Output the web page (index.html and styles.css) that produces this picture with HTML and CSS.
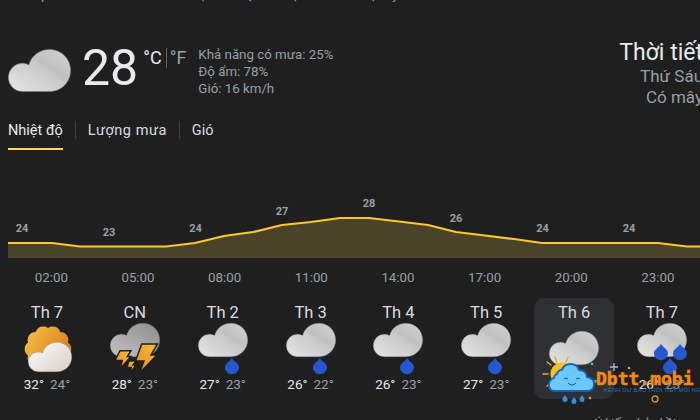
FILE: index.html
```html
<!DOCTYPE html>
<html lang="vi">
<head>
  <meta charset="UTF-8">
  <title>Thời tiết</title>
  <link rel="stylesheet" href="styles.css">
</head>
<body>

  <svg class="defs" width="0" height="0">
    <defs>
      <linearGradient id="greyCloud" x1="0" y1="1" x2="1" y2="0">
        <stop offset="0" stop-color="#e6e6e6"/>
        <stop offset="0.55" stop-color="#c9c9c9"/>
        <stop offset="0.62" stop-color="#c0c0c0"/>
        <stop offset="1" stop-color="#d4d4d4"/>
      </linearGradient>
      <linearGradient id="darkCloud" x1="0" y1="1" x2="1" y2="0">
        <stop offset="0" stop-color="#c4c4c4"/>
        <stop offset="1" stop-color="#8c8c8c"/>
      </linearGradient>
      <linearGradient id="whiteCloud" x1="0" y1="0" x2="1" y2="1">
        <stop offset="0" stop-color="#ffffff"/>
        <stop offset="1" stop-color="#d6cdc6"/>
      </linearGradient>
      <linearGradient id="sunFill" x1="0" y1="0" x2="1" y2="0.6">
        <stop offset="0" stop-color="#f7c547"/>
        <stop offset="1" stop-color="#d9781f"/>
      </linearGradient>
      <linearGradient id="boltFill" x1="1" y1="0" x2="0" y2="1">
        <stop offset="0" stop-color="#f8bd3a"/>
        <stop offset="1" stop-color="#e58a1e"/>
      </linearGradient>
      <symbol id="cloud" viewBox="0 0 50 34" overflow="visible">
        <path d="M11.5 33.7A11.2 11.2 0 0 1 11.5 11.3C13.4 11.3 15 11.7 16.6 12.6C18.6 5 25.2.3 33 .3C42.3.3 49.7 7.7 49.7 17C49.7 26.300 42.300 33.700 33 33.700Z" stroke="#7d7d7d" stroke-opacity=".55" stroke-width=".7"/>
      </symbol>
      <path id="drop" d="M7 0C8.500 3 14 5.500 14 9.200A7 7 0 0 1 0 9.200C0 5.500 5.500 3 7 0Z" fill="#2657cf"/>
    </defs>
  </svg>

  <div class="source"><div class="source-line">Trên quả bản tin mới nhất ở khu vực <a>Hà Nội cho bạn trên thiết bị</a> này</div></div>

  <div class="now">
    <div class="now-main">
      <svg class="now-icon" width="63" height="43"><use href="#cloud" width="63" height="43" fill="url(#greyCloud)"/></svg>
      <div class="now-temp">28</div>
      <div class="units"><span class="unit-on">°C</span><span class="unit-off">°F</span></div>
      <div class="now-info">
        <div>Khả năng có mưa: 25%</div>
        <div>Độ ẩm: 78%</div>
        <div>Gió: 16 km/h</div>
      </div>
    </div>
    <div class="now-place">
      <div class="place-title">Thời tiết</div>
      <div class="place-sub">Thứ Sáu</div>
      <div class="place-sub">Có mây</div>
    </div>
  </div>

  <div class="tabs">
    <div class="tab tab-active">Nhiệt độ</div>
    <div class="tab-sep"></div>
    <div class="tab tab-wide">Lượng mưa</div>
    <div class="tab-sep"></div>
    <div class="tab">Gió</div>
  </div>

  <svg class="chart" viewBox="0 190 700 76" width="700" height="76">
    <path class="chart-area" d="M8 243H52L80 246.500H166L195 243L224 236L253 232L282 225L311 222L340 218H369L399 221.500L428 225L456 232L485 235.500L514 239L542 243H658L687 246.500H700V258H8Z"/>
    <path class="chart-line" d="M8 243H52L80 246.500H166L195 243L224 236L253 232L282 225L311 222L340 218H369L399 221.500L428 225L456 232L485 235.500L514 239L542 243H658L687 246.500H700"/>
    <g class="chart-labels">
      <text x="22" y="232">24</text>
      <text x="109" y="236">23</text>
      <text x="195.500" y="232">24</text>
      <text x="282" y="215">27</text>
      <text x="369" y="207">28</text>
      <text x="456" y="222">26</text>
      <text x="542.500" y="232">24</text>
      <text x="629" y="232">24</text>
    </g>
  </svg>

  <div class="times">
    <div>02:00</div><div>05:00</div><div>08:00</div><div>11:00</div>
    <div>14:00</div><div>17:00</div><div>20:00</div><div>23:00</div>
  </div>

  <div class="days">
    <div class="day">
      <div class="day-name">Th 7</div>
      <svg class="day-icon" viewBox="0 0 50 50" width="50" height="50">
        <path fill="url(#sunFill)" d="M26 5A8 8 0 0 1 38.300 9A8 8 0 0 1 46 19.500A8 8 0 0 1 46 32.500A8 8 0 0 1 38.300 43A8 8 0 0 1 26 47A8 8 0 0 1 13.700 43A8 8 0 0 1 6 32.500A8 8 0 0 1 6 19.500A8 8 0 0 1 13.700 9A8 8 0 0 1 26 5Z"/>
        <use href="#cloud" x="5" y="19" width="46" height="30" fill="url(#whiteCloud)"/>
      </svg>
      <div class="day-temps"><span class="hi">32°</span><span class="lo">24°</span></div>
    </div>

    <div class="day">
      <div class="day-name">CN</div>
      <svg class="day-icon" viewBox="0 0 50 50" width="50" height="50">
        <use href="#cloud" width="50" height="34" fill="url(#darkCloud)"/>
        <g fill="url(#boltFill)" stroke="#1f1f1f" stroke-width="1.500">
          <path d="M31.700 21H47.500L41 32H47L29.500 50L34 38H25.500Z"/>
          <path d="M10 27.700H21L17.300 33.500H21L10 46L12.300 37.500H5Z"/>
          <path d="M19 38H26L23 42H26L20.500 50L21.300 44.500H16.800Z"/>
        </g>
      </svg>
      <div class="day-temps"><span class="hi">28°</span><span class="lo">23°</span></div>
    </div>

    <div class="day">
      <div class="day-name">Th 2</div>
      <svg class="day-icon" viewBox="0 0 50 50" width="50" height="50">
        <use href="#cloud" width="50" height="34" fill="url(#greyCloud)"/>
        <use href="#drop" x="27" y="35"/>
      </svg>
      <div class="day-temps"><span class="hi">27°</span><span class="lo">23°</span></div>
    </div>

    <div class="day">
      <div class="day-name">Th 3</div>
      <svg class="day-icon" viewBox="0 0 50 50" width="50" height="50">
        <use href="#cloud" width="50" height="34" fill="url(#greyCloud)"/>
        <use href="#drop" x="27" y="35"/>
      </svg>
      <div class="day-temps"><span class="hi">26°</span><span class="lo">22°</span></div>
    </div>

    <div class="day">
      <div class="day-name">Th 4</div>
      <svg class="day-icon" viewBox="0 0 50 50" width="50" height="50">
        <use href="#cloud" width="50" height="34" fill="url(#greyCloud)"/>
        <use href="#drop" x="27" y="35"/>
      </svg>
      <div class="day-temps"><span class="hi">26°</span><span class="lo">23°</span></div>
    </div>

    <div class="day">
      <div class="day-name">Th 5</div>
      <svg class="day-icon" viewBox="0 0 50 50" width="50" height="50">
        <use href="#cloud" width="50" height="34" fill="url(#greyCloud)"/>
        <use href="#drop" x="27" y="35"/>
      </svg>
      <div class="day-temps"><span class="hi">27°</span><span class="lo">23°</span></div>
    </div>

    <div class="day day-active">
      <div class="day-name">Th 6</div>
      <svg class="day-icon" viewBox="0 0 50 50" width="50" height="50">
        <use href="#cloud" y="8" width="50" height="34" fill="url(#greyCloud)"/>
      </svg>
      <div class="day-temps"><span class="hi">28°</span><span class="lo">24°</span></div>
    </div>

    <div class="day">
      <div class="day-name">Th 7</div>
      <svg class="day-icon" viewBox="0 0 50 50" width="50" height="50">
        <use href="#cloud" width="50" height="34" fill="url(#greyCloud)"/>
        <use href="#drop" x="17" y="21"/>
        <use href="#drop" x="36" y="21"/>
        <use href="#drop" x="26" y="35"/>
      </svg>
      <div class="day-temps"><span class="hi">26°</span><span class="lo">23°</span></div>
    </div>
  </div>

  <div class="feedback">Ý kiến phản hồi</div>

  <!-- logo dan de len goc duoi -->
  <div class="watermark">
    <svg class="wm-art" viewBox="0 0 100 60" width="100" height="60">
      <g stroke="#f2a71b" stroke-width="1.500" stroke-linecap="round">
        <path d="M3 19H8M7 7L11 10M15 2L17 7M28 2L26 7M7 31L11 28"/>
      </g>
      <circle cx="22" cy="19" r="11.500" fill="#f7c21e"/>
      <path d="M15 18Q17 15.500 19 18" fill="none" stroke="#b9780c" stroke-width="1"/>
      <path d="M15 36H47Q54 36 54 29Q54 23 47 22Q46 15 39 15Q37 9 30.500 9Q24 9 22 15Q19 14 17 19Q14 20 14 23Q9 25 9 30Q9 36 15 36Z" fill="#6cc8fa" stroke="#1662b8" stroke-width="1.800"/>
      <path d="M24 24Q26 22 28 24M36 24Q38 22 40 24" fill="none" stroke="#15508f" stroke-width="1"/>
      <path d="M28 28Q32 32 36 28" fill="none" stroke="#15508f" stroke-width="1"/>
      <g fill="#2f8fe0">
        <path d="M25 40Q27.500 43 27.500 44.500A2.500 2.500 0 0 1 22.500 44.500Q22.500 43 25 40Z"/>
        <path d="M34 42Q36.500 45 36.500 46.500A2.500 2.500 0 0 1 31.500 46.500Q31.500 45 34 42Z"/>
        <path d="M42 40Q44.500 43 44.500 44.500A2.500 2.500 0 0 1 39.500 44.500Q39.500 43 42 40Z"/>
      </g>
      <path d="M74 8V16M70 12H78" stroke="#c9a9f0" stroke-width="1.300"/>
      <circle cx="52" cy="9" r="1.300" fill="#4fc7c7"/>
      <circle cx="89" cy="13" r="1.300" fill="#ef9a1c"/>
      <circle cx="50" cy="43" r="1.300" fill="#ef9a1c"/>
      <circle cx="56" cy="26" r="1.200" fill="#8a8f98"/>
    </svg>
    <svg class="wm-ring" viewBox="0 0 8 8" width="8" height="8"><circle cx="4" cy="4" r="3" fill="none" stroke="#e99a1e" stroke-width="1.300"/></svg>
    <div class="wm-name">Dbtt.mobi</div>
    <div class="wm-tag">KÊNH DỰ BÁO THỜI TIẾT MỖI NGÀY!</div>
  </div>

</body>
</html>
```

FILE: styles.css
```css
html, body {
  margin: 0;
  height: 420px;
  overflow: hidden;
}

body {
  position: relative;
  background: #1f1f1f;
  color: #e8eaed;
  font-family: Roboto, "Liberation Sans", "Noto Sans", sans-serif;
}

.defs {
  position: absolute;
}

.source {
  height: 4px;
  overflow: hidden;
  padding-left: 8px;
}

.source-line {
  margin-top: -13px;
  font-size: 13px;
  line-height: 16px;
  color: #9aa0a6;
  white-space: nowrap;
}

.source-line a {
  color: #8ab4f8;
}

.now {
  display: flex;
  justify-content: space-between;
  align-items: flex-start;
  padding: 36px 0 0 8px;
}

.now-main {
  display: flex;
  align-items: flex-start;
  padding-top: 4px;
}

.now-icon {
  display: block;
  margin-top: 5px;
  overflow: visible;
}

.now-temp {
  margin-left: 11px;
  font-size: 50px;
  line-height: 48px;
}

.units {
  display: flex;
  margin-top: 4px;
  margin-left: 5px;
  font-size: 18px;
  line-height: 20px;
}

.unit-on {
  padding-right: 4px;
}

.unit-off {
  padding-left: 3px;
  border-left: 1px solid #5f6368;
  color: #9aa0a6;
}

.now-info {
  margin-top: 2px;
  margin-left: 12px;
  font-size: 13.3px;
  line-height: 17px;
  color: #9aa0a6;
}

.now-place {
  margin-right: -3px;
  text-align: right;
  white-space: nowrap;
}

.place-title {
  font-size: 23px;
  line-height: 26px;
  color: #e8eaed;
}

.place-sub {
  font-size: 17px;
  line-height: 21px;
  color: #9aa0a6;
}

.tabs {
  display: flex;
  align-items: flex-start;
  margin-top: 11px;
  padding-left: 8px;
  height: 31px;
}

.tab {
  font-size: 14.5px;
  line-height: 23px;
  color: #dadce0;
}

.tab-wide {
  letter-spacing: 0.55px;
}

.tab-active {
  height: 29px;
  border-bottom: 2px solid #fdd663;
  color: #e8eaed;
}

.tab-sep {
  width: 1px;
  height: 18px;
  margin: 2px 12px 0;
  background: #3c4043;
}

.chart {
  display: block;
  margin-top: 40px;
}

.chart-area {
  fill: #4b422a;
}

.chart-line {
  fill: none;
  stroke: #fbc92e;
  stroke-width: 2.2;
}

.chart-labels text {
  font-size: 11px;
  font-weight: 700;
  fill: #9aa0a6;
  text-anchor: middle;
}

.times {
  display: grid;
  grid-template-columns: repeat(8, 86.67px);
  padding-left: 8px;
  font-size: 13.3px;
  line-height: 24px;
  text-align: center;
  color: #9aa0a6;
}

.days {
  display: grid;
  grid-template-columns: repeat(8, 80px);
  column-gap: 7.85px;
  margin-top: 8px;
  padding-left: 7px;
}

.day {
  display: flex;
  flex-direction: column;
  align-items: center;
  box-sizing: border-box;
  height: 101px;
  padding-top: 4px;
  border-radius: 10px;
}

.day-active {
  background: #2f3033;
}

.day-name {
  font-size: 16.5px;
  line-height: 21px;
  color: #dadce0;
}

.day-icon {
  display: block;
  overflow: visible;
}

.day-temps {
  display: flex;
  gap: 6px;
  margin-top: 3px;
  font-size: 13.5px;
  line-height: 16px;
}

.hi {
  color: #e8eaed;
}

.lo {
  color: #9aa0a6;
}

.feedback {
  margin-top: 17px;
  padding-right: 24px;
  font-size: 12px;
  line-height: 16px;
  text-align: right;
  color: #9aa0a6;
}

.watermark {
  position: absolute;
  left: 540px;
  top: 355px;
  width: 160px;
  height: 55px;
}

.wm-art {
  position: absolute;
  left: 0;
  top: 0;
  overflow: visible;
}

.wm-ring {
  position: absolute;
  left: 111px;
  top: 40px;
}

.wm-name {
  position: absolute;
  left: 56px;
  top: 13px;
  font-family: "DejaVu Sans Mono", monospace;
  font-size: 18px;
  font-weight: 700;
  line-height: 22px;
  color: #f0891a;
  white-space: nowrap;
  -webkit-text-stroke: 0.5px #f0891a;
}

.wm-tag {
  position: absolute;
  left: 64px;
  top: 31px;
  font-family: "Liberation Sans", sans-serif;
  font-size: 6px;
  line-height: 8px;
  color: #1f71bb;
  white-space: nowrap;
}
```
